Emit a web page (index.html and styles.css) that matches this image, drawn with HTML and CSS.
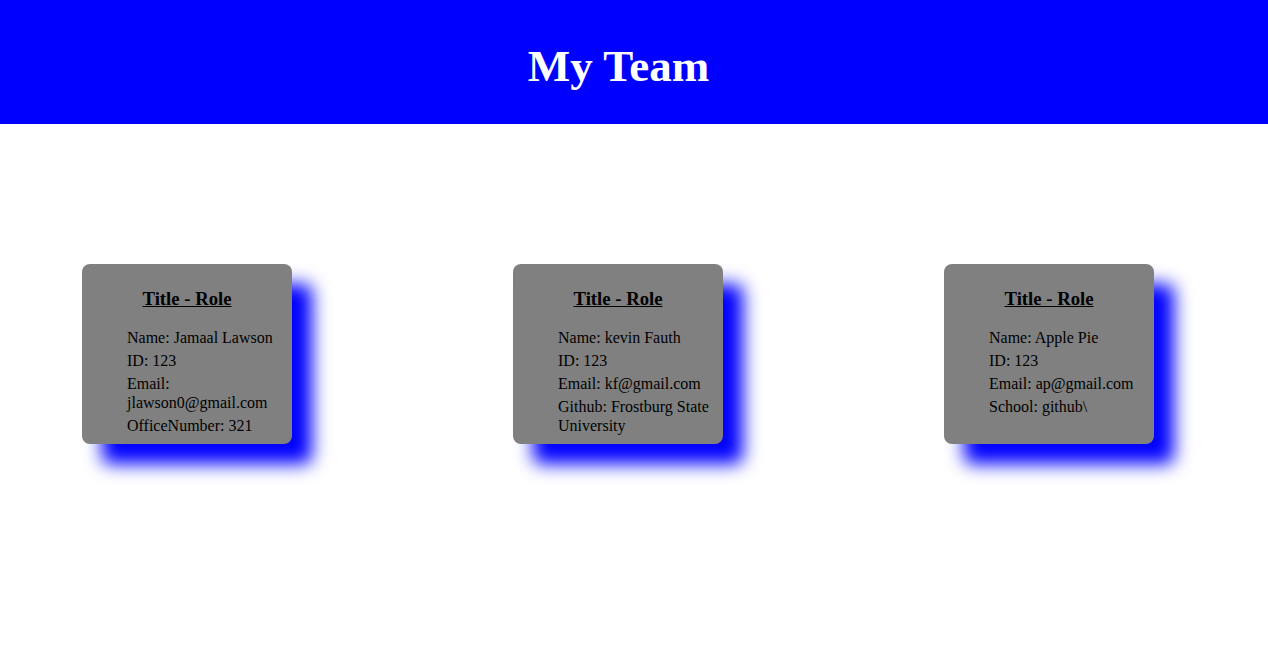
FILE: index.html
```html
<!DOCTYPE html>
<html>
<head>
<meta charset="utf-8">
<title>My Team</title>
<link rel="stylesheet" href="styles.css">
</head>
<body>
<header class="banner">
  <h1 class="banner-title">My Team</h1>
</header>
<main class="team">
  <section class="card">
    <h3 class="card-title">Title - Role</h3>
    <ul class="card-list">
      <li>Name: Jamaal Lawson</li>
      <li>ID: 123</li>
      <li>Email: jlawson0@gmail.com</li>
      <li>OfficeNumber: 321</li>
    </ul>
  </section>
  <section class="card">
    <h3 class="card-title">Title - Role</h3>
    <ul class="card-list">
      <li>Name: kevin Fauth</li>
      <li>ID: 123</li>
      <li>Email: kf@gmail.com</li>
      <li>Github: Frostburg State University</li>
    </ul>
  </section>
  <section class="card">
    <h3 class="card-title">Title - Role</h3>
    <ul class="card-list">
      <li>Name: Apple Pie</li>
      <li>ID: 123</li>
      <li>Email: ap@gmail.com</li>
      <li>School: github\</li>
    </ul>
  </section>
</main>
</body>
</html>
```

FILE: styles.css
```css
html, body {
  margin: 0;
  padding: 0;
  background: #ffffff;
  font-family: "Liberation Serif", "Times New Roman", serif;
  color: #000000;
}

body {
  min-height: 645px;
}

.banner {
  background: #0000ff;
  height: 124px;
  box-sizing: border-box;
  padding: 41px 31px 0 0;
}

.banner-title {
  margin: 0;
  text-align: center;
  color: #ffffff;
  font-size: 45px;
  font-weight: bold;
  line-height: 50px;
}

.team {
  display: flex;
  gap: 221px;
  padding: 140px 0 100px 82px;
}

.card {
  width: 210px;
  height: 180px;
  flex: none;
  box-sizing: border-box;
  padding: 5px;
  background: #808080;
  border-radius: 8px;
  box-shadow: 20px 20px 18px #0000ff;
}

.card-title {
  margin: 18.72px 0 19.7px;
  text-align: center;
  font-size: 18.72px;
  font-weight: bold;
  text-decoration: underline;
}

.card-list {
  list-style: none;
  margin: 0;
  padding: 0 0 0 40px;
  font-size: 16px;
  line-height: 18.4px;
}

.card-list li {
  margin-bottom: 4.6px;
}
```
